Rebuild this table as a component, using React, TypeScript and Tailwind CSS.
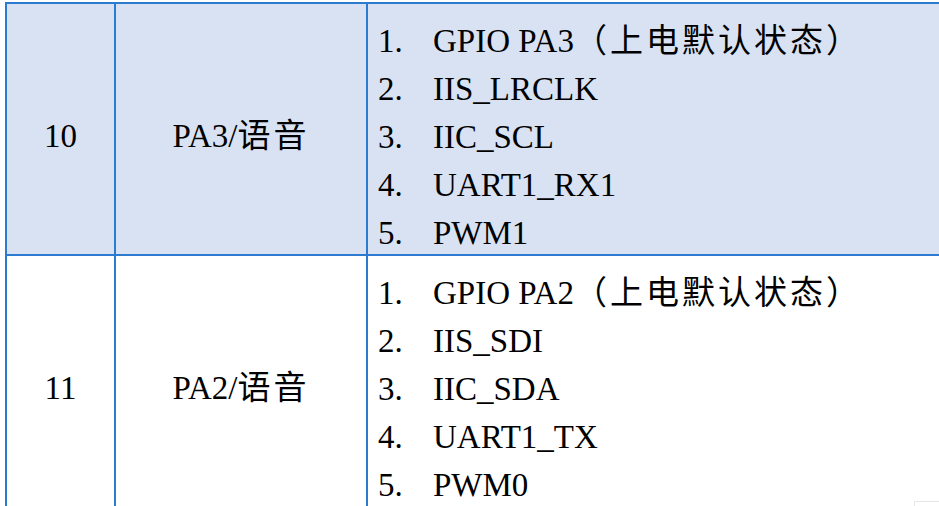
import React from "react";

type PinRow = {
  no: string;
  pin: string;
  funcs: string[];
  shaded: boolean;
};

const rows: PinRow[] = [
  {
    no: "10",
    pin: "PA3/语音",
    funcs: ["GPIO PA3（上电默认状态）", "IIS_LRCLK", "IIC_SCL", "UART1_RX1", "PWM1"],
    shaded: true,
  },
  {
    no: "11",
    pin: "PA2/语音",
    funcs: ["GPIO PA2（上电默认状态）", "IIS_SDI", "IIC_SDA", "UART1_TX", "PWM0"],
    shaded: false,
  },
];

// split latin / CJK so the CJK glyphs get their own size and spacing
function Mixed({ text }: { text: string }) {
  const parts = text.split(/([\u3000-\u9fff\uff00-\uffef]+)/).filter(Boolean);
  return (
    <>
      {parts.map((p, i) =>
        /[\u3000-\u9fff\uff00-\uffef]/.test(p) ? (
          <span key={i} className="text-[33px] tracking-[3px]">
            {p}
          </span>
        ) : (
          <span key={i}>{p}</span>
        )
      )}
    </>
  );
}

function Row({ row }: { row: PinRow }) {
  return (
    <div
      className={`flex h-[252px] border-b-2 border-[#2c7bd0] ${
        row.shaded ? "bg-[#d9e2f3]" : "bg-white"
      }`}
    >
      <div className="flex w-[109px] shrink-0 items-center justify-center border-r-2 border-[#2c7bd0] pt-[14px] leading-[48px]">
        {row.no}
      </div>
      <div className="flex w-[252px] shrink-0 items-center justify-center border-r-2 border-[#2c7bd0] pt-[14px] leading-[48px]">
        <Mixed text={row.pin} />
      </div>
      <div className="flex-1 pl-[10px] pt-[13px] leading-[48px]">
        {row.funcs.map((f, i) => (
          <div key={i} className="flex whitespace-nowrap">
            <span className="w-[55px] shrink-0">{i + 1}.</span>
            <span>
              <Mixed text={f} />
            </span>
          </div>
        ))}
      </div>
    </div>
  );
}

export default function App() {
  return (
    <div className="relative h-[506px] w-[939px] overflow-hidden bg-white font-['Liberation_Serif','Noto_Sans_CJK_SC',serif] text-[33px] text-black">
      <div className="ml-[5px] mt-[2px] w-[1000px] border-l-2 border-t-2 border-[#2c7bd0]">
        {rows.map((r) => (
          <Row key={r.no} row={r} />
        ))}
      </div>
      <div className="absolute left-[914px] top-[501px] h-[10px] w-[40px] border-l border-t border-gray-200 bg-white" />
    </div>
  );
}
